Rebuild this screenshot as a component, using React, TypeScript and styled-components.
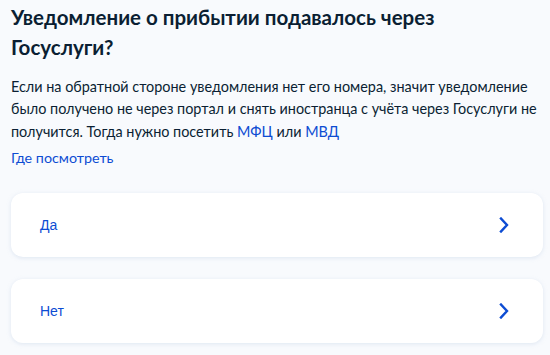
import React from "react";
import styled, { createGlobalStyle } from "styled-components";

const GlobalStyle = createGlobalStyle`
  html, body {
    margin: 0;
    padding: 0;
    background: #f8fafd;
  }
  body {
    font-family: Lato, "Noto Sans", sans-serif;
    color: #0b1f33;
  }
`;

const Page = styled.div`
  padding: 2px 7px 12px 11px;
`;

const Title = styled.h1`
  margin: 0;
  max-width: 480px;
  font-size: 20.5px;
  line-height: 30px;
  font-weight: 700;
  color: #0b1f33;
`;

const Text = styled.p`
  margin: 14px 0 0;
  font-size: 14.4px;
  line-height: 22.4px;
  color: #0b1f33;
`;

const Link = styled.a`
  color: #0d4cd3;
  text-decoration: none;
`;

const HelpLink = styled(Link)`
  display: block;
  margin-top: 4px;
  font-size: 14.3px;
  line-height: 22.4px;
`;

const Options = styled.div`
  display: flex;
  flex-direction: column;
  gap: 22px;
  margin-top: 23px;
`;

const Option = styled.button`
  display: flex;
  align-items: center;
  justify-content: space-between;
  height: 64px;
  width: 100%;
  padding: 0 34px 0 29px;
  border: none;
  border-radius: 12px;
  background: #ffffff;
  box-shadow: 0 1px 4px rgba(176, 194, 222, 0.35);
  cursor: pointer;
  font-family: "Liberation Sans", Arial, sans-serif;
  font-size: 14px;
  color: #0d4cd3;
  text-align: left;
`;

const Chevron = () => (
  <svg width="10" height="16" viewBox="0 0 10 16" fill="none">
    <polyline
      points="2,1.5 8,8 2,14.5"
      stroke="#0d4cd3"
      strokeWidth="2.4"
      strokeLinecap="square"
      strokeLinejoin="miter"
    />
  </svg>
);

const answers = ["Да", "Нет"];

export default function App() {
  return (
    <Page>
      <GlobalStyle />
      <Title>Уведомление о прибытии подавалось через Госуслуги?</Title>
      <Text>
        Если на обратной стороне уведомления нет его номера, значит уведомление
        было получено не через портал и снять иностранца с учёта через Госуслуги не
        получится. Тогда нужно посетить <Link href="#">МФЦ</Link> или{" "}
        <Link href="#">МВД</Link>
      </Text>
      <HelpLink href="#">Где посмотреть</HelpLink>
      <Options>
        {answers.map((a) => (
          <Option key={a}>
            <span>{a}</span>
            <Chevron />
          </Option>
        ))}
      </Options>
    </Page>
  );
}
